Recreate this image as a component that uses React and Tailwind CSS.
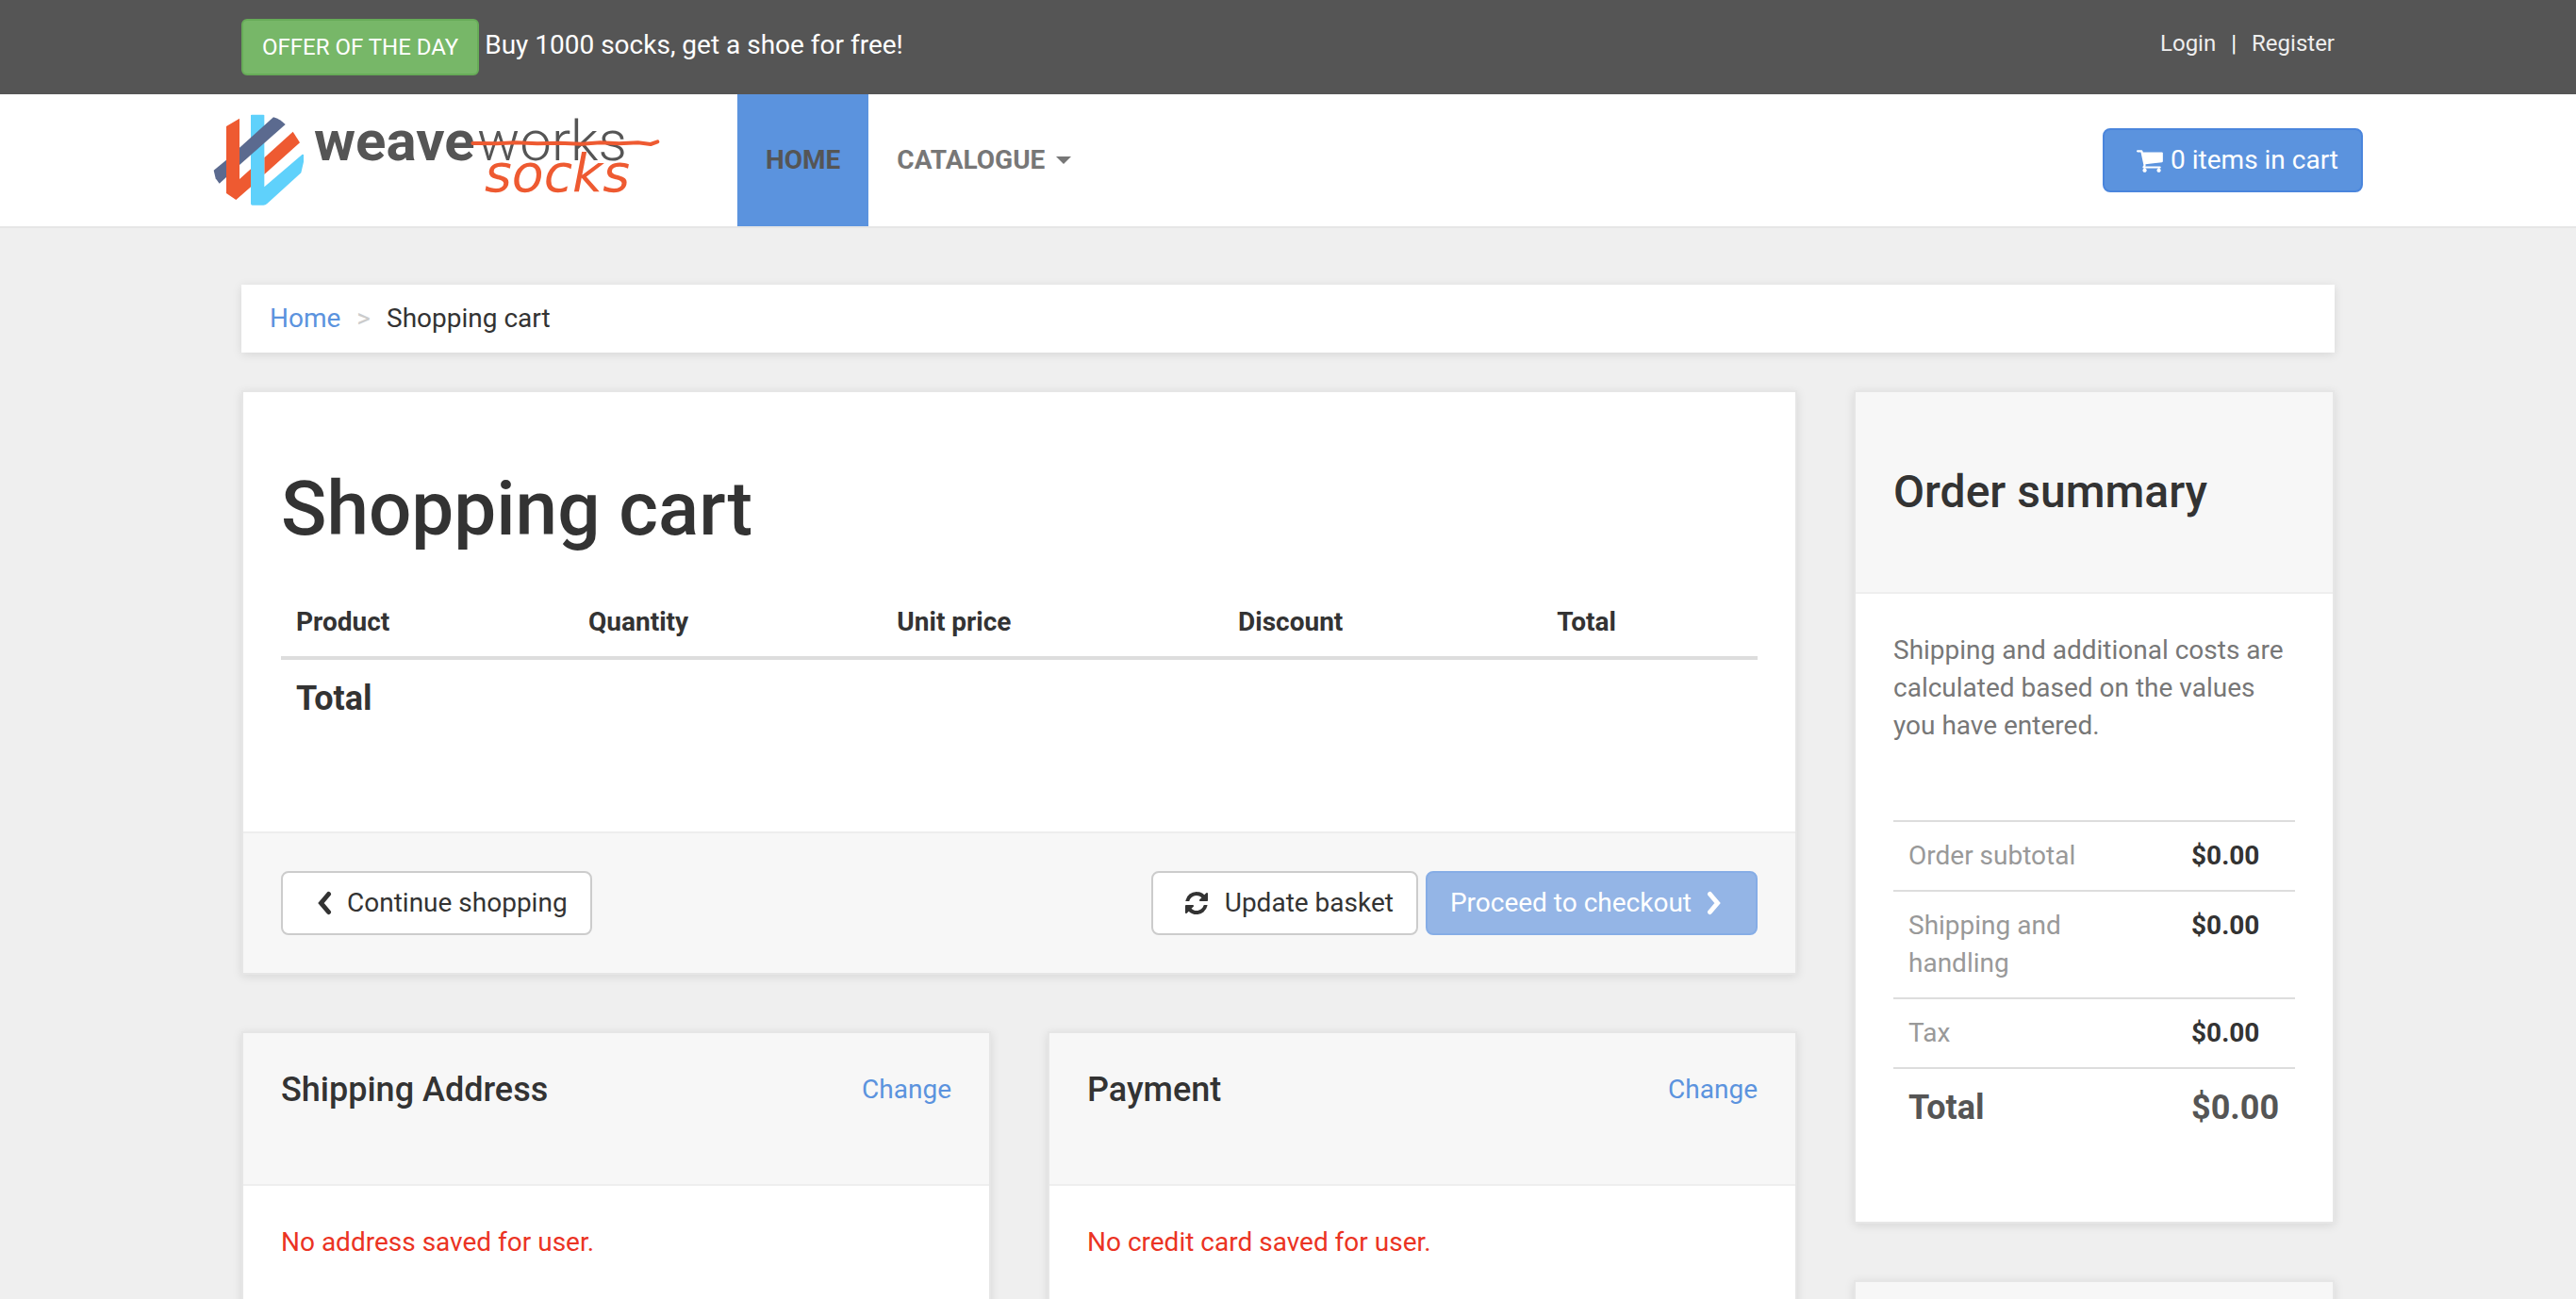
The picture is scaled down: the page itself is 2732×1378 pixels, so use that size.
const CART =
  'M640 1536q0 52-38 90t-90 38-90-38-38-90 38-90 90-38 90 38 38 90zm896 0q0 52-38 90t-90 38-90-38-38-90 38-90 90-38 90 38 38 90zm128-1088v512q0 24-16.5 42.5t-40.5 21.5l-1044 122q13 60 13 70 0 16-24 64h920q26 0 45 19t19 45-19 45-45 19h-1024q-26 0-45-19t-19-45q0-11 8-31.5t16-36 21.5-40 15.5-29.5l-177-823h-204q-26 0-45-19t-19-45 19-45 45-19h256q16 0 28.5 6.5t19.5 15.5 13 24.5 8 26 5.5 29.5 4.5 26h1201q26 0 45 19t19 45z';
const REFRESH =
  'M1639 1056q0 5-1 7-64 268-268 434.5t-478 166.5q-146 0-282.5-55t-243.5-157l-129 129q-19 19-45 19t-45-19-19-45v-448q0-26 19-45t45-19h448q26 0 45 19t19 45-19 45l-137 137q71 66 161 102t187 36q134 0 250-65t186-179q11-17 53-117 8-23 30-23h192q13 0 22.5 9.5t9.5 22.5zm25-800v448q0 26-19 45t-45 19h-448q-26 0-45-19t-19-45 19-45l138-138q-148-137-349-137-134 0-250 65t-186 179q-11 17-53 117-8 23-30 23h-199q-13 0-22.5-9.5t-9.5-22.5v-7q65-268 270-434.5t480-166.5q146 0 284 55.5t245 156.5l130-129q19-19 45-19t45 19 19 45z';

function Glyph({ d, className }) {
  return (
    <svg viewBox="0 0 1792 1792" fill="currentColor" aria-hidden="true" className={className}>
      <path d={d} />
    </svg>
  );
}

function Chevron({ flip }) {
  return (
    <svg
      viewBox="0 0 16 26"
      fill="none"
      stroke="currentColor"
      strokeWidth="5"
      strokeLinecap="round"
      strokeLinejoin="miter"
      aria-hidden="true"
      className="h-[26px] w-4"
    >
      <path d={flip ? 'M3.5 3.5L11.5 13L3.5 22.5' : 'M12.5 3.5L4.5 13L12.5 22.5'} />
    </svg>
  );
}

function Logo() {
  return (
    <svg viewBox="78 60 1422 360" role="img" aria-label="Weaveworks Socks" className="h-[120px] w-[474px]">
      <path fill="#5b6a8f" d="M120 239L80 272L86 298L98 314L120 294Z" />
      <path fill="#ee5a31" d="M120 132L162 107V300L198 268V325L151 366L120 345Z" />
      <path fill="#ee5a31" d="M241 232L332 149L354 184L241 285Z" />
      <path fill="#5fd1fb" d="M198 97Q198 95 201 95H238Q241 95 241 97V325L362 221L366 222V245L358 280L250 378Q245 383 238 383H203Q198 383 198 378Z" />
      <path fill="#5b6a8f" d="M162 200L270 103Q292 110 308 126L162 255Z" />
      <text x="399" y="241" fontFamily="Roboto" fontWeight="700" fontSize="180" fill="#555">weave</text>
      <text x="918" y="241" fontFamily="Roboto" fontWeight="300" fontSize="180" fill="#555">works</text>
      <text x="942" y="340" fontFamily="DejaVu Sans" fontStyle="italic" fontSize="166" fill="#ee5a31">socks</text>
      <path
        fill="none"
        stroke="#ee5a31"
        strokeWidth="12"
        strokeLinecap="round"
        strokeLinejoin="round"
        d="M904 186L980 187L1040 184L1110 187L1180 185L1250 188L1310 184L1370 187L1430 184L1470 189L1492 181"
      />
    </svg>
  );
}

const BUTTON = 'inline-flex h-[68px] items-center rounded-lg border-2 px-6';
const BOX = 'border-2 border-[#e6e6e6] bg-white shadow-[0_2px_10px_rgba(0,0,0,0.1)]';

function AddressBox({ title, message }) {
  return (
    <section className={BOX}>
      <header className="flex items-center justify-between border-b-2 border-[#eee] bg-[#f7f7f7] px-10 pt-10 pb-20">
        <h3 className="text-[36px] leading-10 font-medium">{title}</h3>
        <a href="#" className="text-[#5b93de]">Change</a>
      </header>
      <p className="px-10 pt-10 pb-20 text-[#eb3323]">{message}</p>
    </section>
  );
}

const COLUMNS = [
  ['Product', 'w-[19.8%]'],
  ['Quantity', 'w-[20.9%]'],
  ['Unit price', 'w-[23.1%]'],
  ['Discount', 'w-[21.6%]'],
  ['Total', 'w-[14.6%]'],
];

const SUMMARY = [
  ['Order subtotal', '$0.00'],
  [<>Shipping and<br />handling</>, '$0.00'],
  ['Tax', '$0.00'],
];

export default function App() {
  return (
    <div className="h-screen overflow-hidden bg-[#efefef] font-[Roboto,sans-serif] text-[28px] leading-10 text-[#333]">
      <div className="bg-[#555] text-white">
        <div className="mx-auto flex h-[100px] max-w-[2340px] items-center justify-between px-[60px]">
          <div className="flex items-center gap-1.5">
            <a href="#" className="flex h-[60px] items-center rounded-md border-2 border-[#67ac58] bg-[#77b768] px-5 text-2xl">
              OFFER OF THE DAY
            </a>
            <a href="#" className="pb-1">Buy 1000 socks, get a shoe for free!</a>
          </div>
          <ul className="flex items-center gap-4 pb-2 text-2xl text-[#eee]">
            <li><a href="#">Login</a></li>
            <li aria-hidden="true" className="text-white">|</li>
            <li><a href="#">Register</a></li>
          </ul>
        </div>
      </div>

      <div className="border-b-2 border-[#e6e6e6] bg-white">
        <div className="mx-auto flex h-[140px] max-w-[2340px] items-center px-[30px]">
          <a href="#" className="mr-[82px]"><Logo /></a>
          <nav className="flex h-full font-bold">
            <a href="#" className="flex items-center bg-[#5b93de] px-[30px] text-[#555]">HOME</a>
            <a href="#" className="flex items-center gap-3 px-[30px] text-[#777]">
              CATALOGUE
              <svg viewBox="0 0 16 8" fill="currentColor" aria-hidden="true" className="h-2 w-4">
                <path d="M0 0H16L8 8Z" />
              </svg>
            </a>
          </nav>
          <a href="#" className={`${BUTTON} ml-auto gap-1.5 border-[#4a85dc] bg-[#5b93de] text-white`}>
            <Glyph d={CART} className="ml-2.5 size-[30px]" />
            0 items in cart
          </a>
        </div>
      </div>

      <main className="mx-auto max-w-[2340px] px-[60px] pt-[60px]">
        <nav aria-label="Breadcrumb" className="bg-white px-[30px] py-4 shadow-[0_2px_10px_rgba(0,0,0,0.1)]">
          <ol className="flex gap-[17px]">
            <li><a href="#" className="text-[#5b93de]">Home</a></li>
            <li aria-hidden="true" className="text-[#ccc]">&gt;</li>
            <li>Shopping cart</li>
          </ol>
        </nav>

        <div className="mt-10 grid grid-cols-[1650fr_510fr] items-start gap-[60px]">
          <div className="grid gap-[60px]">
            <section className={BOX}>
              <div className="px-10 pt-20 pb-[100px]">
                <h1 className="mb-10 text-[80px] leading-[88px] font-medium">Shopping cart</h1>
                <table className="w-full table-fixed text-left">
                  <thead>
                    <tr className="border-b-4 border-[#ddd]">
                      {COLUMNS.map(([name, width]) => (
                        <th key={name} className={`${width} p-4 font-bold`}>{name}</th>
                      ))}
                    </tr>
                  </thead>
                  <tfoot>
                    <tr>
                      <th colSpan={5} className="p-4 text-[36px] leading-[50px] font-bold">Total</th>
                    </tr>
                  </tfoot>
                </table>
              </div>
              <footer className="flex justify-between border-t-2 border-[#eee] bg-[#f7f7f7] p-10">
                <a href="#" className={`${BUTTON} gap-4 border-[#ccc] bg-white pl-9`}>
                  <Chevron />
                  Continue shopping
                </a>
                <div className="flex gap-2">
                  <button type="button" className={`${BUTTON} gap-4 border-[#ccc] bg-white pl-8`}>
                    <Glyph d={REFRESH} className="size-[28px]" />
                    Update basket
                  </button>
                  <button type="button" disabled className={`${BUTTON} gap-4 border-[#86ade6] bg-[#94b5e6] pr-9 text-white`}>
                    Proceed to checkout
                    <Chevron flip />
                  </button>
                </div>
              </footer>
            </section>

            <div className="grid grid-cols-2 gap-[60px]">
              <AddressBox title="Shipping Address" message="No address saved for user." />
              <AddressBox title="Payment" message="No credit card saved for user." />
            </div>
          </div>

          <aside className="grid gap-[60px]">
            <section className={BOX}>
              <header className="border-b-2 border-[#eee] bg-[#f7f7f7] px-10 py-20">
                <h2 className="text-5xl leading-[52px] font-medium">Order summary</h2>
              </header>
              <div className="px-10 pt-10 pb-20">
                <p className="mb-20 text-[#777]">
                  Shipping and additional costs are calculated based on the values you have entered.
                </p>
                <table className="w-full text-left">
                  <tbody>
                    {SUMMARY.map(([label, value], i) => (
                      <tr key={i} className="border-t-2 border-[#ddd] align-top">
                        <th scope="row" className="p-4 font-normal text-[#999]">{label}</th>
                        <td className="w-[126px] p-4 font-bold">{value}</td>
                      </tr>
                    ))}
                    <tr className="border-t-2 border-[#ddd] text-[36px] leading-[50px] text-[#555]">
                      <th scope="row" className="p-4 font-bold">Total</th>
                      <td className="p-4 font-bold">$0.00</td>
                    </tr>
                  </tbody>
                </table>
              </div>
            </section>
            <section className={BOX}>
              <div className="h-40 bg-[#f7f7f7]" />
            </section>
          </aside>
        </div>
      </main>
    </div>
  );
}
